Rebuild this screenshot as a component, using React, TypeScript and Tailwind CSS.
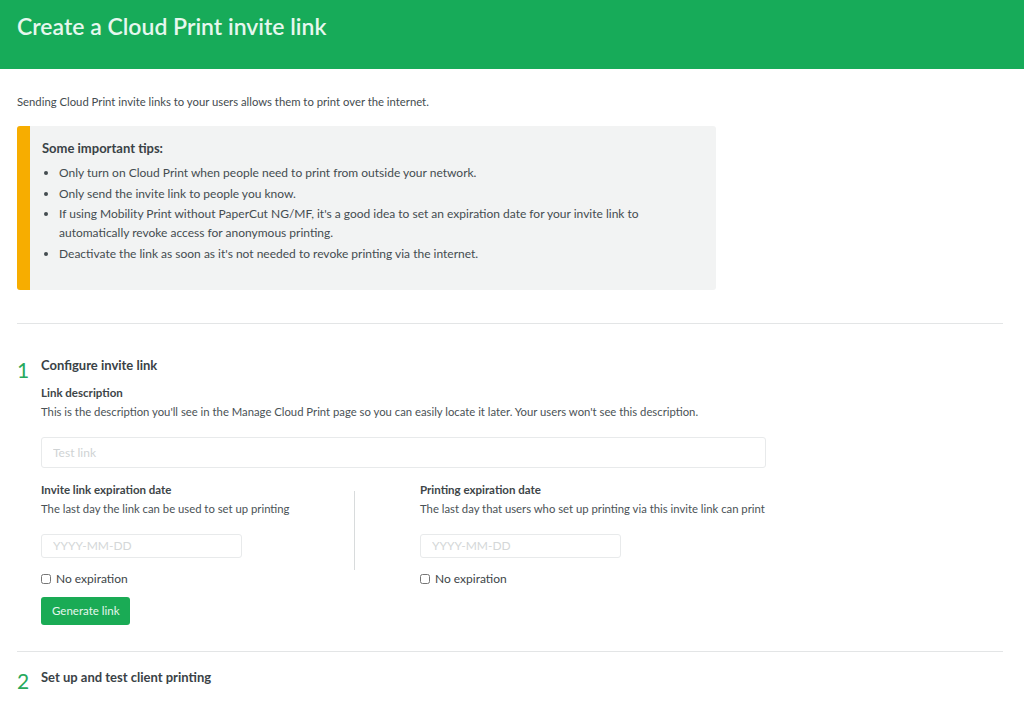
import { useState } from "react"

const tips = [
  "Only turn on Cloud Print when people need to print from outside your network.",
  "Only send the invite link to people you know.",
  "If using Mobility Print without PaperCut NG/MF, it's a good idea to set an expiration date for your invite link to automatically revoke access for anonymous printing.",
  "Deactivate the link as soon as it's not needed to revoke printing via the internet.",
]

const DateField = ({ title, hint }: { title: string; hint: string }) => {
  const [noExp, setNoExp] = useState(false)
  return (
    <div>
      <div className="text-[11.5px] font-bold text-[#3d4548] leading-[18px]">{title}</div>
      <div className="text-[11.3px] text-[#4a5256] leading-[20px]">{hint}</div>
      <input
        type="text"
        placeholder="YYYY-MM-DD"
        className="mt-[15px] w-[201px] h-[24px] border border-[#e8eaeb] rounded-[3px] px-[11px] text-[12px] placeholder:text-[#d4d7d8] outline-none"
      />
      <label className="mt-[12px] flex items-center gap-[5px] text-[12px] text-[#3d4548]">
        <input
          type="checkbox"
          checked={noExp}
          onChange={() => setNoExp(!noExp)}
          className="w-[10px] h-[10px] accent-[#1aab55]"
        />
        No expiration
      </label>
    </div>
  )
}

export default function App() {
  return (
    <div className="min-h-[705px] bg-white font-['Lato',sans-serif] text-[#444c50]">
      <header className="h-[69px] bg-[#17ab59] flex items-center px-[17px]">
        <h1 className="text-[23px] font-semibold text-[#e6f7ee] -mt-[16px]">Create a Cloud Print invite link</h1>
      </header>

      <div className="px-[17px] pr-[21px]">
        <p className="mt-[24px] text-[11.3px] leading-[18px]">
          Sending Cloud Print invite links to your users allows them to print over the internet.
        </p>

        <div className="mt-[15px] w-[699px] flex rounded-[3px] overflow-hidden bg-[#f2f3f3]">
          <div className="w-[13px] bg-[#f7ad00] shrink-0" />
          <div className="pl-[12px] pr-[24px] pt-[13px] pb-[27px]">
            <div className="text-[13px] font-bold text-[#3a4246] leading-[18px]">Some important tips:</div>
            <ul className="mt-[6px] list-disc pl-[17px] text-[12px] leading-[19px] space-y-[1.5px]">
              {tips.map((t) => (
                <li key={t}>{t}</li>
              ))}
            </ul>
          </div>
        </div>

        <hr className="mt-[33px] border-t border-[#e3e5e6]" />

        <section className="mt-[32px] flex">
          <div className="w-[24px] text-[21px] text-[#27a95c] -mt-[1px] leading-[30px]">1</div>
          <div className="flex-1">
            <h2 className="text-[13px] font-bold text-[#3a4246] leading-[18px]">Configure invite link</h2>
            <div className="mt-[10px] text-[11.5px] font-bold text-[#3d4548] leading-[18px]">Link description</div>
            <div className="text-[11.3px] text-[#4a5256] leading-[20px]">
              This is the description you'll see in the Manage Cloud Print page so you can easily locate it later. Your users won't see this description.
            </div>
            <input
              type="text"
              placeholder="Test link"
              className="mt-[15px] w-[725px] h-[31px] border border-[#e8eaeb] rounded-[3px] px-[11px] text-[12px] placeholder:text-[#cfd3d4] outline-none block"
            />
            <div className="mt-[13px] flex">
              <div className="w-[313px]">
                <DateField title="Invite link expiration date" hint="The last day the link can be used to set up printing" />
                <button className="mt-[9px] h-[28px] px-[11px] bg-[#1aab55] text-[#e6f7ee] text-[11.5px] rounded-[3px]">
                  Generate link
                </button>
              </div>
              <div className="w-px bg-[#d8dbdc] mt-[10px] h-[79px]" />
              <div className="pl-[65px]">
                <DateField title="Printing expiration date" hint="The last day that users who set up printing via this invite link can print" />
              </div>
            </div>
          </div>
        </section>

        <hr className="mt-[26px] border-t border-[#e3e5e6]" />

        <section className="mt-[14px] flex">
          <div className="w-[24px] text-[21px] text-[#27a95c] leading-[30px]">2</div>
          <h2 className="text-[13px] font-bold text-[#3a4246] leading-[18px] pt-[2px]">Set up and test client printing</h2>
        </section>
      </div>
    </div>
  )
}
